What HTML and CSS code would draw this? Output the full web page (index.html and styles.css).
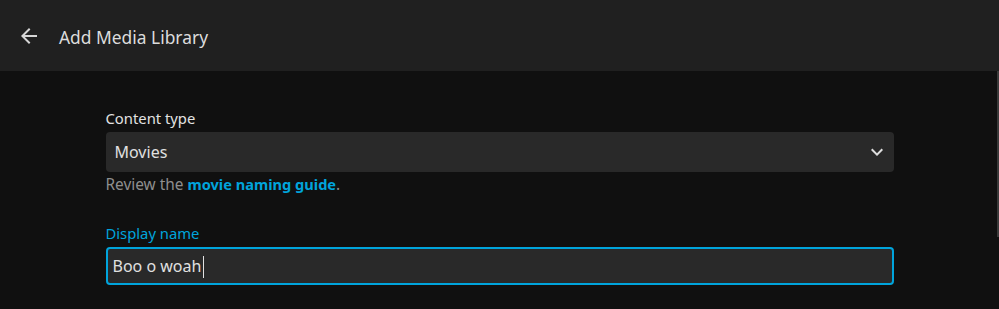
FILE: index.html
```html
<!DOCTYPE html>
<html lang="en">
<head>
<meta charset="utf-8">
<title>Add Media Library</title>
<link rel="stylesheet" href="styles.css">
</head>
<body>
<header class="topbar">
  <button class="back-btn" aria-label="Back">
    <svg viewBox="0 0 24 24" width="24" height="24"><path d="M20 11H7.83l5.59-5.59L12 4l-8 8 8 8 1.41-1.41L7.83 13H20v-2z" fill="currentColor"/></svg>
  </button>
  <h1 class="title">Add Media Library</h1>
</header>
<main class="content">
  <form class="form">
    <div class="field">
      <label class="label">Content type</label>
      <div class="select">
        <span class="select-value">Movies</span>
        <svg class="chevron" viewBox="0 0 24 24" width="24" height="24"><path d="M7.41 8.59L12 13.17l4.59-4.58L18 10l-6 6-6-6 1.41-1.41z" fill="currentColor"/></svg>
      </div>
      <div class="help">Review the <a class="link" href="#">movie naming guide</a>.</div>
    </div>
    <div class="field field-focused">
      <label class="label label-focused">Display name</label>
      <div class="input"><span class="input-value">Boo o woah</span><span class="caret"></span></div>
    </div>
  </form>
  <div class="scrollbar"></div>
</main>
</body>
</html>
```

FILE: styles.css
```css
html, body {
  margin: 0;
  padding: 0;
  background: #101010;
  height: 100%;
  overflow: hidden;
}
body {
  font-family: "Noto Sans", "Open Sans", sans-serif;
  color: #e0e0e0;
}
.topbar {
  display: flex;
  align-items: center;
  height: 71px;
  background: #202020;
  padding-left: 17px;
  box-sizing: border-box;
}
.back-btn {
  display: flex;
  align-items: center;
  justify-content: center;
  width: 24px;
  height: 24px;
  padding: 0;
  margin: 1px 0 0 0;
  border: 0;
  background: none;
  color: #d6d6d6;
}
.title {
  margin: 2px 0 0 18px;
  font-size: 17.4px;
  font-weight: 400;
  color: #dcdcdc;
  line-height: 24px;
}
.content {
  position: relative;
  padding-top: 37px;
}
.form {
  width: 788px;
  margin: 0 auto;
}
.field-focused {
  margin-top: 28px;
}
.label {
  display: block;
  font-size: 14.8px;
  line-height: 20px;
  color: #e2e2e2;
  margin-bottom: 4px;
}
.label-focused {
  color: #00a4dc;
}
.select {
  display: flex;
  align-items: center;
  justify-content: space-between;
  height: 40px;
  background: #292929;
  border-radius: 4px;
  padding: 0 5px 0 9px;
  box-sizing: border-box;
}
.select-value {
  font-size: 16px;
  color: #e0e0e0;
}
.chevron {
  color: #dedede;
  margin-top: -1px;
}
.help {
  margin-top: 3px;
  height: 20px;
  font-size: 15.4px;
  line-height: 20px;
  color: #8e8e8e;
}
.link {
  color: #00a4dc;
  font-weight: 700;
  font-size: 14.6px;
  line-height: 1;
  text-decoration: none;
}
.input {
  display: flex;
  align-items: center;
  height: 38px;
  box-sizing: border-box;
  border: 2px solid #00a4dc;
  border-radius: 4px;
  background: #292929;
  padding: 0 5px;
}
.input-value {
  font-size: 16px;
  color: #e0e0e0;
}
.caret {
  display: inline-block;
  width: 1px;
  height: 22px;
  margin-left: 2px;
  margin-top: 1px;
  background: #e0e0e0;
}
.scrollbar {
  position: absolute;
  top: 0;
  right: 0;
  width: 2px;
  height: 166px;
  background: #3a3a3a;
}
```
